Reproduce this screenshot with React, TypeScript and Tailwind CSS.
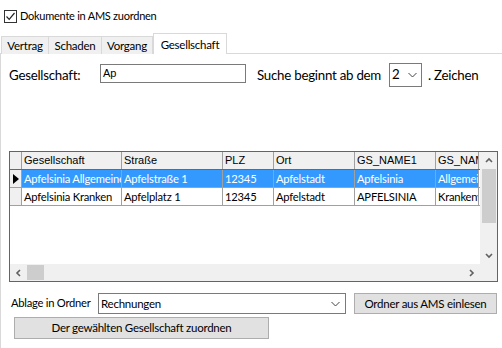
import React from "react";

const ui = "font-['Lato','Noto_Sans',sans-serif] text-[11.5px] tracking-[-0.25px] text-black";
const gridFont = "font-['Liberation_Sans','Arial',sans-serif] text-[11px] tracking-normal";

const columns = [
  { title: "Gesellschaft", w: "w-[100px]" },
  { title: "Straße", w: "w-[101px]" },
  { title: "PLZ", w: "w-[51px]" },
  { title: "Ort", w: "w-[81px]" },
  { title: "GS_NAME1", w: "w-[81px]" },
  { title: "GS_NAME2", w: "w-[43px]" },
];

const rows = [
  ["Apfelsinia Allgemeine", "Apfelstraße 1", "12345", "Apfelstadt", "Apfelsinia", "Allgemeine"],
  ["Apfelsinia Kranken", "Apfelplatz 1", "12345", "Apfelstadt", "APFELSINIA", "Krankenversicherung"],
];

function Chevron({ dir }: { dir: "up" | "down" | "left" | "right" }) {
  const d = {
    up: "M1 5 L4 2 L7 5",
    down: "M1 2 L4 5 L7 2",
    left: "M5 1 L2 4 L5 7",
    right: "M2 1 L5 4 L2 7",
  }[dir];
  return (
    <svg width="8" height="8" viewBox="0 0 8 8">
      <path d={d} fill="none" stroke="#606060" strokeWidth="1.6" />
    </svg>
  );
}

function ComboArrow() {
  return (
    <svg width="9" height="6" viewBox="0 0 9 6">
      <path d="M0.5 1 L4.5 5 L8.5 1" fill="none" stroke="#444" strokeWidth="1" />
    </svg>
  );
}

function DataGrid() {
  return (
    <div className={`${gridFont} ml-[8px] mt-[64px] flex h-[131px] w-[489px] flex-col border border-[#646464] bg-white`}>
      <div className="flex h-[112px]">
        <div className="flex w-[470px] flex-col overflow-hidden">
          {/* header */}
          <div className="flex h-[18px] shrink-0 border-b border-[#696969] bg-[#f0f0f0]">
            <div className="w-[12px] shrink-0 border-r border-[#a0a0a0]" />
            {columns.map((c) => (
              <div
                key={c.title}
                className={`${c.w} shrink-0 overflow-hidden whitespace-nowrap border-r border-[#a0a0a0] pl-[2px] leading-[17px]`}
              >
                {c.title}
              </div>
            ))}
          </div>
          {rows.map((r, i) => {
            const sel = i === 0;
            return (
              <div key={i} className="flex h-[18px] shrink-0 border-b border-[#a0a0a0]">
                <div className="flex w-[12px] shrink-0 items-center justify-center border-r border-[#a0a0a0] bg-[#f0f0f0]">
                  {sel && (
                    <svg width="6" height="10" viewBox="0 0 6 10">
                      <path d="M0 0 L6 5 L0 10 Z" fill="#000" />
                    </svg>
                  )}
                </div>
                {r.map((v, j) => (
                  <div
                    key={j}
                    className={`${columns[j].w} shrink-0 overflow-hidden whitespace-nowrap border-r border-[#a0a0a0] pl-[2px] font-['Lato',sans-serif] text-[11.2px] tracking-[-0.2px] leading-[17px] ${
                      sel ? "bg-[#3399ff] text-white" : "text-black"
                    }`}
                  >
                    {v}
                  </div>
                ))}
              </div>
            );
          })}
        </div>
        {/* vertical scrollbar */}
        <div className="flex w-[17px] flex-col items-center bg-[#f0f0f0]">
          <div className="flex h-[17px] items-center justify-center">
            <Chevron dir="up" />
          </div>
          <div className="h-[54px] w-[14px] bg-[#cdcdcd]" />
          <div className="flex-1" />
          <div className="flex h-[17px] items-center justify-center">
            <Chevron dir="down" />
          </div>
        </div>
      </div>
      {/* horizontal scrollbar */}
      <div className="flex h-[17px] bg-[#f0f0f0]">
        <div className="flex w-[17px] items-center justify-center">
          <Chevron dir="left" />
        </div>
        <div className="my-[1px] w-[17px] bg-[#cdcdcd]" />
        <div className="flex-1" />
        <div className="flex w-[17px] items-center justify-center">
          <Chevron dir="right" />
        </div>
        <div className="w-[17px]" />
      </div>
    </div>
  );
}

export default function App() {
  return (
    <div className={`${ui} relative h-[348px] w-[502px] overflow-hidden whitespace-nowrap bg-white`}>
      {/* checkbox */}
      <div className="mt-[9px] flex h-[14px] items-center pl-[4px]">
        <div className="flex h-[13px] w-[13px] items-center justify-center border border-[#333] bg-white">
          <svg width="11" height="11" viewBox="0 0 11 11">
            <path d="M1.5 5.5 L4.2 8.3 L9.5 2" fill="none" stroke="#222" strokeWidth="1.2" />
          </svg>
        </div>
        <span className="ml-[3px] text-[11px] leading-[14px]">Dokumente in AMS zuordnen</span>
      </div>

      {/* tabs */}
      <div className="relative z-10 mt-[10px] flex h-[21px] items-end pl-[1px]">
        {[
          { t: "Vertrag", w: "w-[48px]" },
          { t: "Schaden", w: "w-[53px]" },
          { t: "Vorgang", w: "w-[51px]" },
        ].map(({ t, w }, i) => (
          <div
            key={t}
            className={`${w} flex h-[18px] items-center justify-center border border-b-0 border-[#d9d9d9] bg-[#f0f0f0] ${
              i > 0 ? "border-l-0" : ""
            }`}
          >
            {t}
          </div>
        ))}
        <div className="flex h-[21px] w-[74px] items-start justify-center border border-b-0 border-[#d9d9d9] bg-white pt-[2px]">
          Gesellschaft
        </div>
      </div>

      {/* panel */}
      <div className="-mt-[1px] h-[296px] border-l border-t border-[#d9d9d9] bg-white">
        <div className="mt-[9px] flex items-start text-[13.3px] tracking-[-0.25px]">
          <span className="ml-[8px] mt-[3px] w-[91px] leading-[18px]">Gesellschaft:</span>
          <div className="mt-[1px] flex h-[19px] w-[146px] items-center border border-[#7a7a7a] pl-[2px] font-['Liberation_Sans',sans-serif] text-[11px] tracking-normal">
            Ap
          </div>
          <span className="ml-[11px] mt-[3px] w-[125px] leading-[18px]">Suche beginnt ab dem</span>
          <div className="ml-[7px] flex h-[24px] w-[33px] items-center justify-between border border-[#7a7a7a] pl-[2px] pr-[4px] text-[13.3px]">
            <span>2</span>
            <ComboArrow />
          </div>
          <span className="ml-[6px] mt-[3px] leading-[18px]">. Zeichen</span>
        </div>

        <DataGrid />

        <div className="mt-[11px] flex items-center">
          <span className="ml-[10px] w-[87px] text-[11.2px]">Ablage in Ordner</span>
          <div className="flex h-[21px] w-[248px] items-center justify-between border border-[#7a7a7a] pl-[2px] pr-[5px]">
            <span>Rechnungen</span>
            <ComboArrow />
          </div>
          <button className="ml-[8px] h-[21px] w-[143px] border border-[#adadad] bg-[#e1e1e1]">
            Ordner aus AMS einlesen
          </button>
        </div>
        <button className="ml-[13px] mt-[3px] h-[22px] w-[255px] border border-[#adadad] bg-[#e1e1e1]">
          Der gewählten Gesellschaft zuordnen
        </button>
      </div>
    </div>
  );
}
